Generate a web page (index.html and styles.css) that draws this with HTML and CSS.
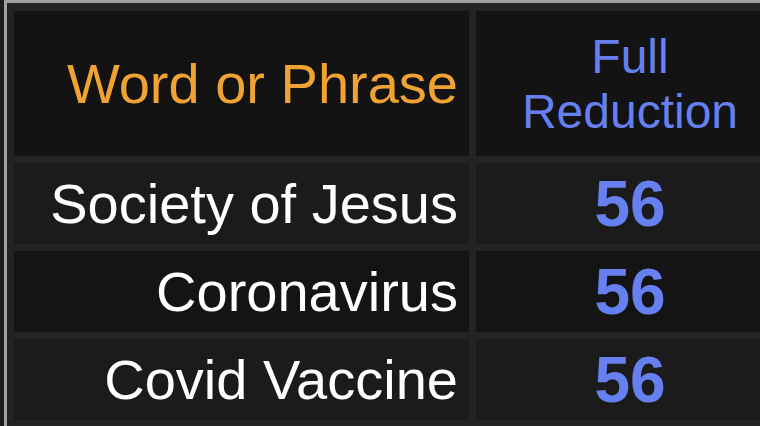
FILE: index.html
```html
<!DOCTYPE html>
<html lang="en">
<head>
<meta charset="utf-8">
<title>Gematria table</title>
<link rel="stylesheet" href="styles.css">
</head>
<body>
<div class="sheet">
  <table class="calc">
    <colgroup>
      <col class="col-word">
      <col class="col-num">
    </colgroup>
    <thead>
      <tr class="head-row">
        <th class="h-word">Word or Phrase</th>
        <th class="h-num">Full<br>Reduction</th>
      </tr>
    </thead>
    <tbody>
      <tr class="row row-a">
        <td class="word">Society of Jesus</td>
        <td class="num">56</td>
      </tr>
      <tr class="row row-b">
        <td class="word">Coronavirus</td>
        <td class="num">56</td>
      </tr>
      <tr class="row row-a">
        <td class="word">Covid Vaccine</td>
        <td class="num">56</td>
      </tr>
    </tbody>
  </table>
</div>
</body>
</html>
```
FILE: styles.css
```css
html, body {
  margin: 0;
  padding: 0;
  background: #1d1d1d;
  overflow: hidden;
  width: 760px;
  height: 426px;
}

body {
  padding-left: 4px;
  box-sizing: border-box;
  font-family: "Liberation Sans", Arial, Helvetica, sans-serif;
}

.sheet {
  width: 800px;
  background: #232323;
  border-left: 3px solid #a0a0a0;
  border-top: 3px solid #a0a0a0;
  padding-top: 1px;
}

.calc {
  table-layout: fixed;
  border-collapse: separate;
  border-spacing: 7px;
  width: 784px;
  background: #232323;
}

.col-word { width: 455px; }
.col-num { width: 308px; }

.calc th,
.calc td {
  padding: 0;
  vertical-align: middle;
}

.head-row { height: 145px; }
.head-row th { background: #131313; font-weight: normal; }

.calc .h-word {
  text-align: right;
  padding-right: 11px;
  color: #f0a233;
  font-size: 56px;
}

.calc .h-num {
  text-align: center;
  color: #6680f0;
  font-size: 48px;
  line-height: 55px;
}

.row { height: 81px; }
.row-a td { background: #1b1b1b; }
.row-b td { background: #141414; }

.calc .word {
  text-align: right;
  padding-right: 11px;
  color: #ffffff;
  font-size: 56px;
}

.calc .num {
  text-align: center;
  color: #6680f0;
  font-weight: bold;
  font-size: 64px;
}
```
